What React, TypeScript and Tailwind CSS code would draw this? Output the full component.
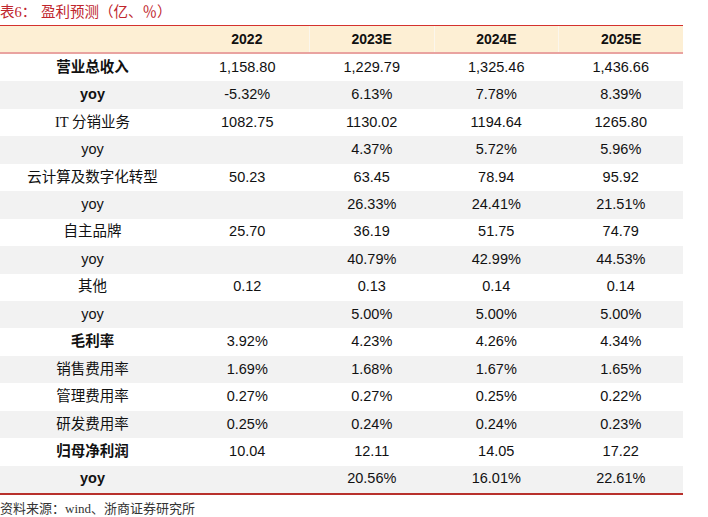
const CN = '"Liberation Serif", "Noto Sans CJK SC", serif';
const NUM = '"Liberation Sans", Arial, sans-serif';

type Row = { label: string; vals: string[]; bold?: boolean };

const YEARS = ['2022', '2023E', '2024E', '2025E'];

const ROWS: Row[] = [
  { label: '营业总收入', vals: ['1,158.80', '1,229.79', '1,325.46', '1,436.66'], bold: true },
  { label: 'yoy', vals: ['-5.32%', '6.13%', '7.78%', '8.39%'], bold: true },
  { label: 'IT 分销业务', vals: ['1082.75', '1130.02', '1194.64', '1265.80'] },
  { label: 'yoy', vals: ['', '4.37%', '5.72%', '5.96%'] },
  { label: '云计算及数字化转型', vals: ['50.23', '63.45', '78.94', '95.92'] },
  { label: 'yoy', vals: ['', '26.33%', '24.41%', '21.51%'] },
  { label: '自主品牌', vals: ['25.70', '36.19', '51.75', '74.79'] },
  { label: 'yoy', vals: ['', '40.79%', '42.99%', '44.53%'] },
  { label: '其他', vals: ['0.12', '0.13', '0.14', '0.14'] },
  { label: 'yoy', vals: ['', '5.00%', '5.00%', '5.00%'] },
  { label: '毛利率', vals: ['3.92%', '4.23%', '4.26%', '4.34%'], bold: true },
  { label: '销售费用率', vals: ['1.69%', '1.68%', '1.67%', '1.65%'] },
  { label: '管理费用率', vals: ['0.27%', '0.27%', '0.25%', '0.22%'] },
  { label: '研发费用率', vals: ['0.25%', '0.24%', '0.24%', '0.23%'] },
  { label: '归母净利润', vals: ['10.04', '12.11', '14.05', '17.22'], bold: true },
  { label: 'yoy', vals: ['', '20.56%', '16.01%', '22.61%'], bold: true },
];

function Label({ text, bold }: { text: string; bold?: boolean }) {
  // latin words use the sans face, chinese the CJK face
  const latin = /^[A-Za-z]+$/.test(text);
  return (
    <span
      className={`text-[14.5px] text-[#111] ${bold ? 'font-bold' : ''}`}
      style={{ fontFamily: latin ? NUM : CN }}
    >
      {text}
    </span>
  );
}

export default function App() {
  return (
    <div className="w-[708px] h-[517px] bg-white relative">
      <div className="h-[25px] flex items-center text-[14.5px] text-[#c0262d]" style={{ fontFamily: CN }}>
        <span className="w-[41px]">表6：</span>
        <span>盈利预测（亿、％）</span>
      </div>

      <div className="w-[683px]">
        <div className="flex h-[29px] bg-[#fdefd4] border-t border-t-[#d4312e] border-b-2 border-b-[#e9a3a0]">
          <div className="w-[185px]" />
          {YEARS.map((y, i) => (
            <div
              key={y}
              className={`flex-1 flex items-center justify-center text-[14px] font-bold text-[#111] ${i > 0 ? 'border-l border-l-[#fbf6ec]' : ''}`}
              style={{ fontFamily: NUM }}
            >
              {y}
            </div>
          ))}
        </div>

        {ROWS.map((r, i) => (
          <div key={i} className={`flex h-[27.45px] items-center ${i % 2 === 1 ? 'bg-[#f2f2f2]' : 'bg-white'}`}>
            <div className="w-[185px] flex justify-center">
              <Label text={r.label} bold={r.bold} />
            </div>
            {r.vals.map((v, j) => (
              <div key={j} className="flex-1 text-center text-[14.5px] text-[#111]" style={{ fontFamily: NUM }}>
                {v}
              </div>
            ))}
          </div>
        ))}
        <div className="h-[2px] bg-[#b8302c]" />
      </div>

      <div className="mt-[4px] text-[13px] text-[#333]" style={{ fontFamily: CN }}>
        资料来源：wind、浙商证券研究所
      </div>
    </div>
  );
}
